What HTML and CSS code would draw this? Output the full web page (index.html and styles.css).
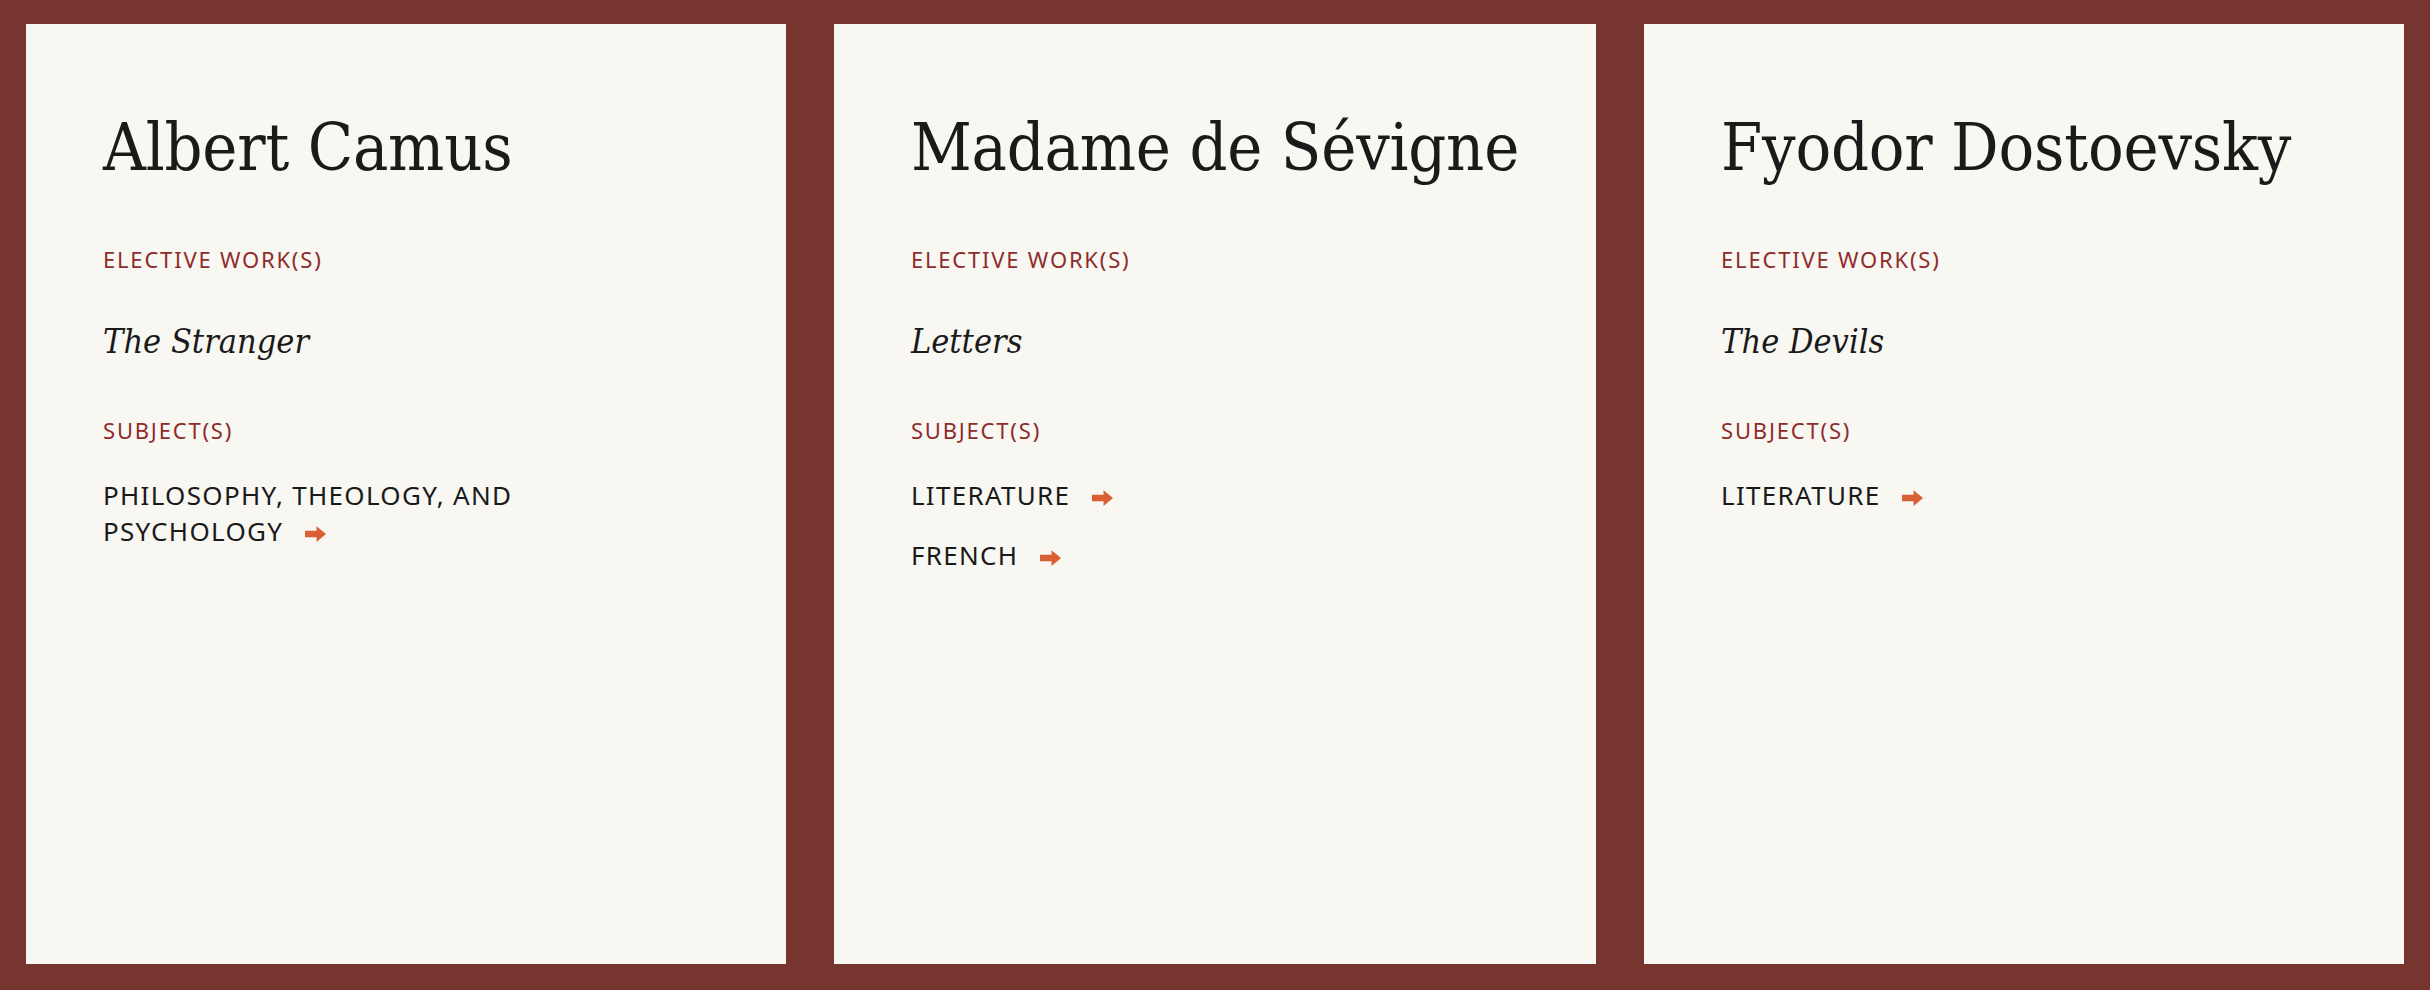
FILE: index.html
```html
<!DOCTYPE html>
<html lang="en">
<head>
<meta charset="utf-8">
<title>Authors</title>
<link rel="stylesheet" href="styles.css">
</head>
<body>
<main class="cards">
  <article class="card">
    <h2 class="name">Albert Camus</h2>
    <div class="label">Elective Work(s)</div>
    <p class="work">The Stranger</p>
    <div class="label">Subject(s)</div>
    <ul class="subjects">
      <li><a class="subject" href="#">Philosophy, Theology, and Psychology<svg class="arrow" viewBox="0 0 20 15" width="21" height="16"><path d="M0 4.5H11V0L20 7.5L11 15V10.5H0Z"/></svg></a></li>
    </ul>
  </article>
  <article class="card">
    <h2 class="name">Madame de Sévigne</h2>
    <div class="label">Elective Work(s)</div>
    <p class="work">Letters</p>
    <div class="label">Subject(s)</div>
    <ul class="subjects">
      <li><a class="subject" href="#">Literature<svg class="arrow" viewBox="0 0 20 15" width="21" height="16"><path d="M0 4.5H11V0L20 7.5L11 15V10.5H0Z"/></svg></a></li>
      <li><a class="subject" href="#">French<svg class="arrow" viewBox="0 0 20 15" width="21" height="16"><path d="M0 4.5H11V0L20 7.5L11 15V10.5H0Z"/></svg></a></li>
    </ul>
  </article>
  <article class="card">
    <h2 class="name">Fyodor Dostoevsky</h2>
    <div class="label">Elective Work(s)</div>
    <p class="work">The Devils</p>
    <div class="label">Subject(s)</div>
    <ul class="subjects">
      <li><a class="subject" href="#">Literature<svg class="arrow" viewBox="0 0 20 15" width="21" height="16"><path d="M0 4.5H11V0L20 7.5L11 15V10.5H0Z"/></svg></a></li>
    </ul>
  </article>
</main>
</body>
</html>
```
FILE: styles.css
```css
html, body {
  margin: 0;
  padding: 0;
  background: #76352e;
}
body {
  padding: 24px 26px 26px;
  height: 990px;
  box-sizing: border-box;
}
.cards {
  display: grid;
  grid-template-columns: repeat(3, 1fr);
  gap: 48px;
  height: 100%;
}
.card {
  background: #f8f7f2;
  padding: 84px 77px;
  color: #1a1a1a;
}
.name {
  font-family: "DejaVu Serif Condensed", "DejaVu Serif", serif;
  font-stretch: condensed;
  font-weight: normal;
  font-size: 66px;
  line-height: 80px;
  margin: 0 0 56px;
  letter-spacing: -0.2px;
  white-space: nowrap;
}
.label {
  font-family: "Noto Sans", sans-serif;
  font-size: 22px;
  line-height: 30px;
  text-transform: uppercase;
  letter-spacing: 1.8px;
  color: #8e2b2b;
}
.work {
  font-family: "DejaVu Serif Condensed", "DejaVu Serif", serif;
  font-stretch: condensed;
  font-style: italic;
  font-size: 34px;
  line-height: 40px;
  margin: 47px 0 54px;
}
.subjects {
  list-style: none;
  margin: 32px 0 0;
  padding: 0;
  display: flex;
  flex-direction: column;
  gap: 24px;
  max-width: 430px;
}
.subject {
  font-family: "Noto Sans", sans-serif;
  font-size: 26px;
  line-height: 36px;
  text-transform: uppercase;
  letter-spacing: 1.3px;
  color: #1a1a1a;
  text-decoration: none;
}
.arrow {
  fill: #d95f35;
  margin-left: 22px;
  vertical-align: -1px;
}
```
